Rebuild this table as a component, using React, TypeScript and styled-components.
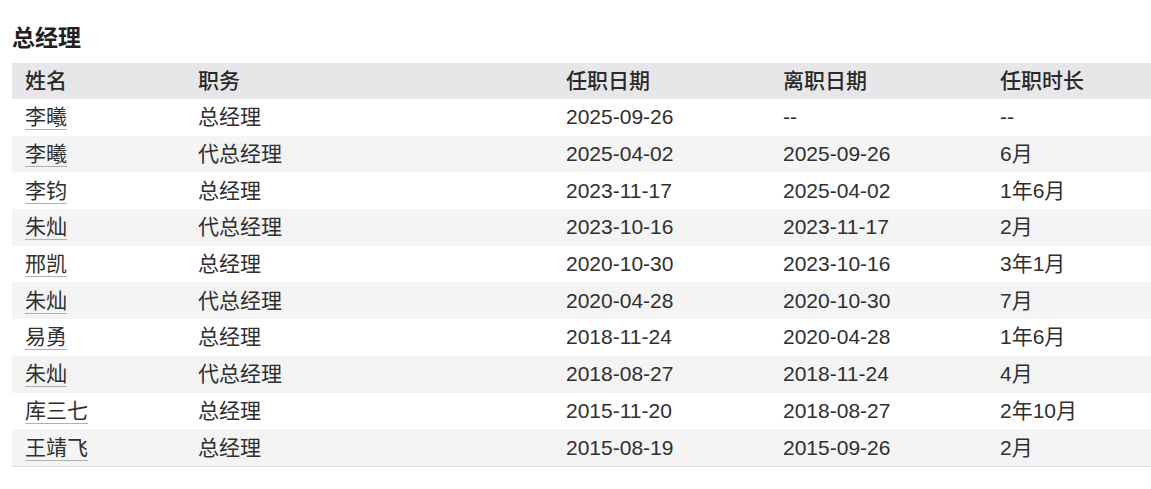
import React from "react";
import styled, { createGlobalStyle } from "styled-components";

const Global = createGlobalStyle`
  html, body { margin: 0; padding: 0; background: #ffffff; }
  body { font-family: "Liberation Sans", "Noto Sans CJK SC", sans-serif; }
`;

const Page = styled.div`
  padding: 23px 0 0 12px;
  color: #333;
`;

const Title = styled.h2`
  margin: 0 0 10px 0;
  font-size: 23px;
  line-height: 30px;
  font-weight: 700;
  color: #1f1f1f;
`;

const Table = styled.div`
  display: flex;
  flex-direction: column;
  border-bottom: 1px solid #dcdcdc;
`;

const Row = styled.div<{ $variant: "head" | "odd" | "even" }>`
  display: grid;
  grid-template-columns: 173px 368px 217px 217px 1fr;
  height: ${(p) => (p.$variant === "head" ? "36px" : "36.7px")};
  align-items: center;
  background: ${(p) =>
    p.$variant === "head" ? "#e7e7e9" : p.$variant === "even" ? "#f4f4f4" : "#ffffff"};
`;

const Cell = styled.div<{ $head?: boolean }>`
  padding-left: 13px;
  font-size: 21px;
  line-height: 26px;
  font-weight: ${(p) => (p.$head ? 500 : 400)};
  color: ${(p) => (p.$head ? "#2a2a2a" : "#2f2f2f")};
  white-space: nowrap;
`;

const Name = styled.span`
  display: inline-block;
  line-height: 24px;
  border-bottom: 1px solid #b0b0b0;
`;

const rows: [string, string, string, string, string][] = [
  ["李曦", "总经理", "2025-09-26", "--", "--"],
  ["李曦", "代总经理", "2025-04-02", "2025-09-26", "6月"],
  ["李钧", "总经理", "2023-11-17", "2025-04-02", "1年6月"],
  ["朱灿", "代总经理", "2023-10-16", "2023-11-17", "2月"],
  ["邢凯", "总经理", "2020-10-30", "2023-10-16", "3年1月"],
  ["朱灿", "代总经理", "2020-04-28", "2020-10-30", "7月"],
  ["易勇", "总经理", "2018-11-24", "2020-04-28", "1年6月"],
  ["朱灿", "代总经理", "2018-08-27", "2018-11-24", "4月"],
  ["库三七", "总经理", "2015-11-20", "2018-08-27", "2年10月"],
  ["王靖飞", "总经理", "2015-08-19", "2015-09-26", "2月"],
];

const headers = ["姓名", "职务", "任职日期", "离职日期", "任职时长"];

export default function App() {
  return (
    <Page>
      <Global />
      <Title>总经理</Title>
      <Table>
        <Row $variant="head">
          {headers.map((h) => (
            <Cell $head key={h}>
              {h}
            </Cell>
          ))}
        </Row>
        {rows.map((r, i) => (
          <Row key={i} $variant={i % 2 === 0 ? "odd" : "even"}>
            <Cell>
              <Name>{r[0]}</Name>
            </Cell>
            <Cell>{r[1]}</Cell>
            <Cell>{r[2]}</Cell>
            <Cell>{r[3]}</Cell>
            <Cell>{r[4]}</Cell>
          </Row>
        ))}
      </Table>
    </Page>
  );
}
